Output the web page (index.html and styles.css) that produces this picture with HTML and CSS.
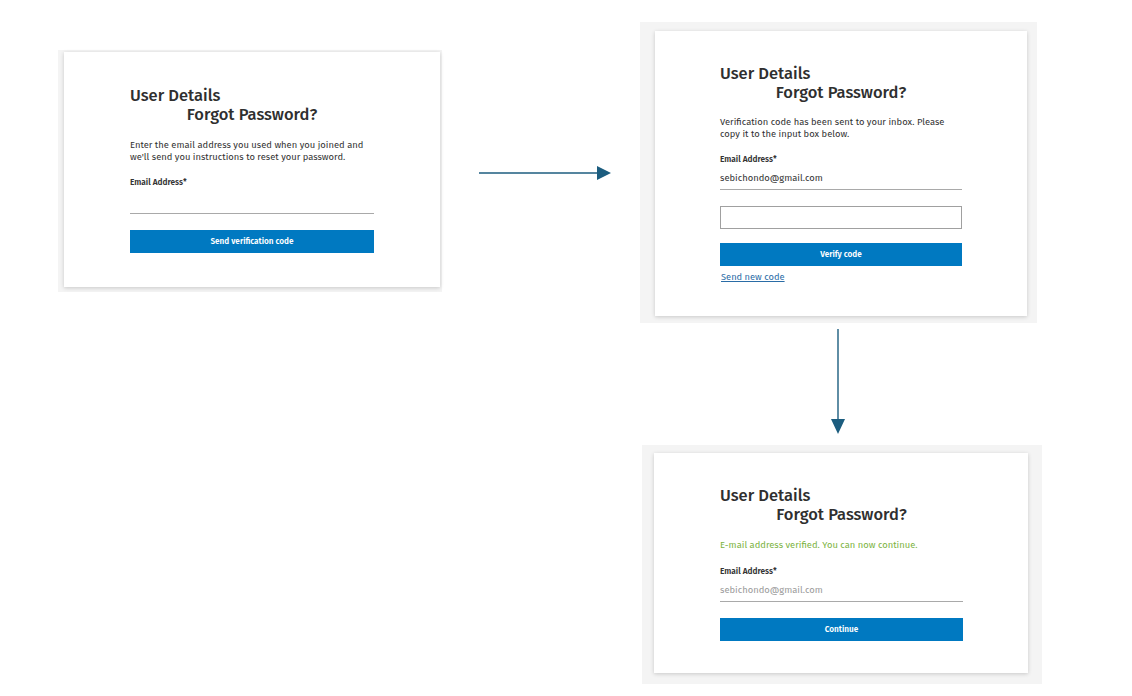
FILE: index.html
```html
<!DOCTYPE html>
<html lang="en">
<head>
<meta charset="utf-8">
<title>Forgot Password flow</title>
<link rel="stylesheet" href="styles.css">
</head>
<body>
<div class="canvas">
  <section class="frame frame-1">
    <div class="card card-1">
      <h1 class="title">User Details</h1>
      <h2 class="title title-sub">Forgot Password?</h2>
      <p class="desc">Enter the email address you used when you joined and we'll send you instructions to reset your password.</p>
      <div class="label">Email Address*</div>
      <div class="field field-empty"></div>
      <div class="btn btn-1">Send verification code</div>
    </div>
  </section>

  <svg class="arrow arrow-h" width="140" height="20" viewBox="0 0 140 20">
    <line x1="0" y1="10" x2="120" y2="10" stroke="#1c5d7f" stroke-width="1.4"/>
    <polygon points="118,3 132,10 118,17" fill="#1c5d7f"/>
  </svg>

  <section class="frame frame-2">
    <div class="card card-2">
      <h1 class="title">User Details</h1>
      <h2 class="title title-sub">Forgot Password?</h2>
      <p class="desc desc-2">Verification code has been sent to your inbox. Please copy it to the input box below.</p>
      <div class="label">Email Address*</div>
      <div class="field field-2">sebichondo@gmail.com</div>
      <div class="codebox"></div>
      <div class="btn btn-2">Verify code</div>
      <a class="link">Send new code</a>
    </div>
  </section>

  <svg class="arrow arrow-v" width="20" height="110" viewBox="0 0 20 110">
    <line x1="10" y1="0" x2="10" y2="92" stroke="#1c5d7f" stroke-width="1.4"/>
    <polygon points="3,90 17,90 10,105" fill="#1c5d7f"/>
  </svg>

  <section class="frame frame-3">
    <div class="card card-3">
      <h1 class="title">User Details</h1>
      <h2 class="title title-sub">Forgot Password?</h2>
      <p class="success">E-mail address verified. You can now continue.</p>
      <div class="label">Email Address*</div>
      <div class="field field-3">sebichondo@gmail.com</div>
      <div class="btn btn-3">Continue</div>
    </div>
  </section>
</div>
</body>
</html>
```

FILE: styles.css
```css
* { box-sizing: border-box; }
html, body {
  margin: 0;
  padding: 0;
  background: #ffffff;
}
body {
  font-family: "Fira Sans", "Open Sans", "Noto Sans", sans-serif;
  color: #333333;
}
.canvas {
  position: relative;
  width: 1132px;
  height: 696px;
  overflow: hidden;
}

/* diagram nodes */
.frame {
  position: absolute;
  background: #f4f4f4;
}
.frame-1 { left: 58px; top: 50px; padding: 2px 2px 5px 6px; }
.frame-2 { left: 640px; top: 22px; padding: 9px 10px 7px 15px; }
.frame-3 { left: 642px; top: 445px; padding: 8px 14px 11px 12px; }

.card {
  background: #ffffff;
  box-shadow: 0 1px 4px rgba(0, 0, 0, 0.18);
  display: flex;
  flex-direction: column;
}
.card-1 { width: 376px; height: 235px; padding: 34px 66px 0 66px; }
.card-2 { width: 372px; height: 285px; padding: 33px 65px 0 65px; }
.card-3 { width: 374px; height: 220px; padding: 33px 65px 0 66px; }

.title {
  margin: 0;
  font-size: 16.5px;
  line-height: 19px;
  font-weight: 500;
  color: #2f2f2f;
}
.title-sub { text-align: center; }

.desc {
  margin: 15px 0 0 0;
  font-size: 9.4px;
  line-height: 11.5px;
  color: #333;
}
.desc-2 { margin-top: 14px; }

.success {
  margin: 15px 0 0 0;
  font-size: 9.4px;
  line-height: 12px;
  color: #7cb342;
}

.label {
  margin-top: 15px;
  font-size: 8.3px;
  line-height: 10px;
  font-weight: 600;
  color: #333;
}
.card-2 .label { margin-top: 15px; }
.card-3 .label { margin-top: 15px; }

.field {
  height: 23px;
  border-bottom: 1px solid #a9a9a9;
  font-size: 9.4px;
  line-height: 22px;
  color: #333;
}
.field-empty { margin-top: 4px; }
.field-2 { margin-top: 3px; }
.field-3 { margin-top: 3px; color: #9a9a9a; }

.codebox {
  margin-top: 16px;
  height: 23px;
  border: 1px solid #a0a0a0;
}

.btn {
  height: 23px;
  background: #0079c1;
  color: #ffffff;
  font-size: 8.2px;
  font-weight: 600;
  line-height: 23px;
  text-align: center;
}
.btn-1 { margin-top: 16px; }
.btn-2 { margin-top: 14px; }
.btn-3 { margin-top: 16px; }

.link {
  margin-top: 5px;
  align-self: flex-start;
  padding-left: 1px;
  font-size: 9.3px;
  line-height: 12px;
  color: #2a6ca6;
  text-decoration: underline;
}

/* connectors */
.arrow { position: absolute; }
.arrow-h { left: 479px; top: 163px; }
.arrow-v { left: 828px; top: 329px; }
```
